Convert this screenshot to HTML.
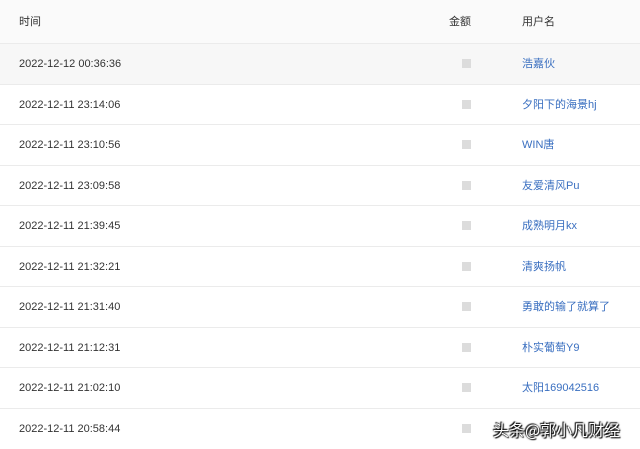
<!DOCTYPE html>
<html><head><meta charset="utf-8"><style>
body{margin:0;width:640px;height:446px;overflow:hidden;background:#fff;font-family:"Liberation Sans","Noto Sans CJK SC",sans-serif;font-size:11px;color:#333;position:relative}
.row{position:absolute;left:0;width:640px;border-bottom:1px solid #ebebeb;box-sizing:border-box;line-height:40px}
.t,.u,.h{position:absolute;top:0;line-height:40px;height:40px}
.t{left:19px}
.a{position:absolute;left:462px;width:9px;height:9px;background:#dcdcdc;top:15px}
.u{left:522px;color:#3a6fc0}
.wm{position:absolute;left:493px;top:417px;font-size:16px;line-height:24px;color:#fff;text-shadow:0 0 2px #000,1px 1px 1px #000,-1px -1px 1px #000;font-family:"Noto Sans CJK SC",sans-serif}
</style></head><body>
<div class="row" style="top:0;height:44px;background:#fafafa"><span class="t" style="top:2px">时间</span><span class="h" style="left:449px;top:2px">金额</span><span class="h" style="left:522px;top:2px">用户名</span></div>
<div class="row" style="top:44px;height:40.5px;background:#f7f7f7"><span class="t">2022-12-12 00:36:36</span><span class="a"></span><span class="u">浩嘉伙</span></div>
<div class="row" style="top:84.5px;height:40.5px"><span class="t">2022-12-11 23:14:06</span><span class="a"></span><span class="u">夕阳下的海景hj</span></div>
<div class="row" style="top:125px;height:40.5px"><span class="t">2022-12-11 23:10:56</span><span class="a"></span><span class="u">WIN唐</span></div>
<div class="row" style="top:165.5px;height:40.5px"><span class="t">2022-12-11 23:09:58</span><span class="a"></span><span class="u">友爱清风Pu</span></div>
<div class="row" style="top:206px;height:40.5px"><span class="t">2022-12-11 21:39:45</span><span class="a"></span><span class="u">成熟明月kx</span></div>
<div class="row" style="top:246.5px;height:40.5px"><span class="t">2022-12-11 21:32:21</span><span class="a"></span><span class="u">清爽扬帆</span></div>
<div class="row" style="top:287px;height:40.5px"><span class="t">2022-12-11 21:31:40</span><span class="a"></span><span class="u">勇敢的输了就算了</span></div>
<div class="row" style="top:327.5px;height:40.5px"><span class="t">2022-12-11 21:12:31</span><span class="a"></span><span class="u">朴实葡萄Y9</span></div>
<div class="row" style="top:368px;height:40.5px"><span class="t">2022-12-11 21:02:10</span><span class="a"></span><span class="u">太阳169042516</span></div>
<div class="row" style="top:408.5px;height:40.5px;border:none"><span class="t">2022-12-11 20:58:44</span><span class="a"></span></div>
<div class="wm">头条@郭小凡财经</div>
</body></html>
